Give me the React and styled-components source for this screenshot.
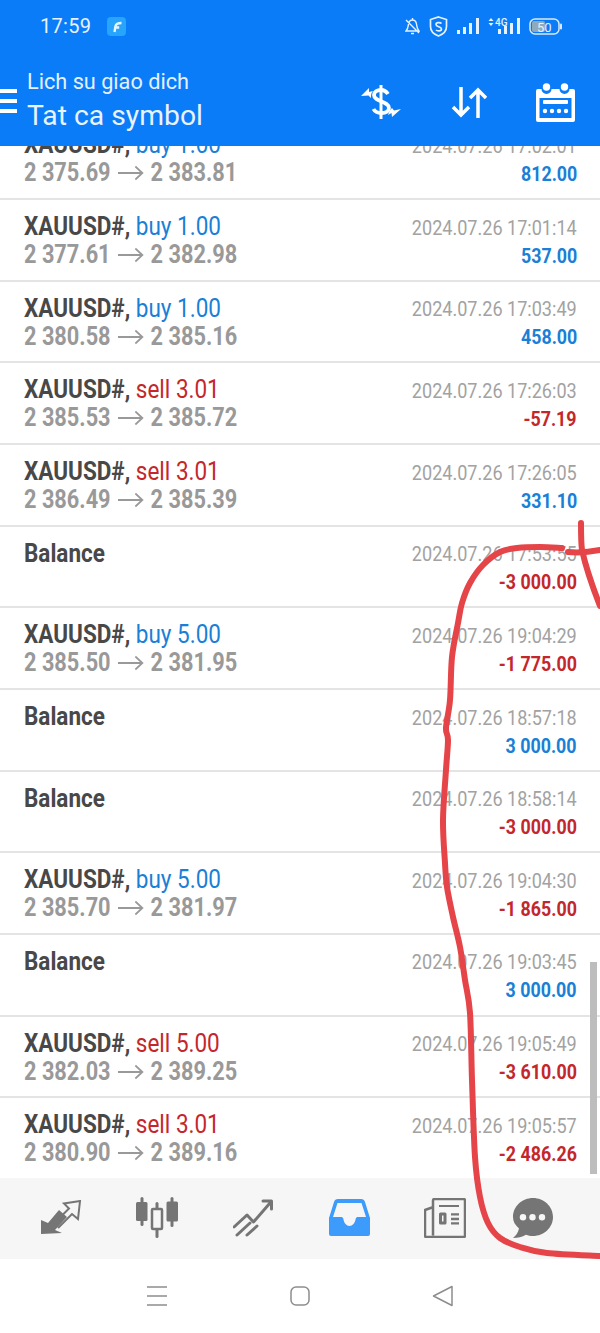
import React from "react";
import styled, { createGlobalStyle } from "styled-components";

const Global = createGlobalStyle`
  html, body { margin: 0; padding: 0; background: #fff; }
  #root { width: 600px; height: 1333px; }
`;

const Screen = styled.div`
  position: relative;
  width: 600px;
  height: 1333px;
  overflow: hidden;
  display: flex;
  flex-direction: column;
  font-family: Roboto, "Liberation Sans", sans-serif;
  background: #fff;
`;

const Header = styled.header`
  flex: 0 0 146px;
  background: #0a7cf8;
  color: #fff;
  display: flex;
  flex-direction: column;
  position: relative;
  z-index: 1;
`;

const StatusBar = styled.div`
  height: 52px;
  display: flex;
  align-items: center;
  padding: 0 38px 0 40px;
  font-size: 20px;
  color: #e6f2ff;
`;

const Time = styled.span`
  letter-spacing: 0.3px;
  margin-right: 16px;
`;

const StatusRight = styled.div`
  margin-left: auto;
  display: flex;
  align-items: center;
  gap: 9px;
`;

const Toolbar = styled.div`
  flex: 1;
  display: flex;
  align-items: center;
`;

const Burger = styled.div`
  width: 17px;
  height: 24px;
  margin: 4px 10px 0 0;
  display: flex;
  flex-direction: column;
  justify-content: space-between;
  span { display: block; height: 4px; background: #fff; }
`;

const Titles = styled.div`
  display: flex;
  flex-direction: column;
  margin-top: 4px;
`;

const Sub = styled.div`
  font-size: 21.7px;
  line-height: 30px;
  color: #e3f0ff;
`;

const Title = styled.div`
  font-size: 28.3px;
  line-height: 38px;
  color: #e8f3ff;
`;

const Actions = styled.div`
  margin-left: auto;
  display: flex;
  align-items: center;
  gap: 49px;
  padding-right: 25px;
  margin-top: 6px;
`;

const ListArea = styled.main`
  flex: 0 0 1032px;
  overflow: hidden;
`;

const List = styled.div`
  margin-top: -27.6px;
`;

const Row = styled.div`
  height: 81.67px;
  box-sizing: border-box;
  border-bottom: 2px solid #e4e4e4;
  padding: 12px 23px 0 24px;
  display: flex;
  justify-content: space-between;
`;

const Narrow = styled.div`
  transform: scaleX(${p => p.$k || 0.86});
  transform-origin: ${p => (p.$right ? "right" : "left")} center;
  white-space: nowrap;
`;

const Col = styled.div`
  display: flex;
  flex-direction: column;
  align-items: ${p => (p.$right ? "flex-end" : "flex-start")};
`;

const Main = styled(Narrow)`
  font-size: 25px;
  line-height: 29px;
  font-weight: 700;
  color: #484848;
`;

const Side = styled.span`
  font-weight: 400;
  color: ${p => (p.$sell ? "#c4272b" : "#1a7fd6")};
`;

const Prices = styled(Narrow)`
  font-size: 25px;
  line-height: 28px;
  font-weight: 700;
  color: #999;
  display: flex;
  align-items: center;
`;

const Arrow = styled.svg`
  margin: 0 8px 0 8px;
`;

const Stamp = styled(Narrow)`
  font-size: 21px;
  line-height: 28px;
  color: #a2a2a2;
  padding-top: 1.5px;
`;

const Profit = styled(Narrow)`
  font-size: 21px;
  line-height: 28px;
  font-weight: 700;
  color: ${p => (p.$loss ? "#c4272b" : "#1a7fd6")};
`;

const Scrollbar = styled.div`
  position: absolute;
  left: 590px;
  top: 962px;
  width: 7px;
  height: 212px;
  background: #bdbdbd;
`;

const Tabs = styled.nav`
  flex: 0 0 81px;
  background: #f6f6f6;
  display: grid;
  grid-template-columns: repeat(6, 96px);
  padding-left: 13px;
  box-sizing: border-box;
`;

const Tab = styled.div`
  display: flex;
  align-items: center;
  justify-content: center;
  padding-bottom: 2px;
  margin-right: ${p => p.$pull || 0}px;
`;

const NavBar = styled.div`
  flex: 1;
  display: flex;
  align-items: center;
  justify-content: center;
  gap: 122px;
`;

const Ink = styled.svg`
  position: absolute;
  left: 0;
  top: 0;
  pointer-events: none;
  z-index: 2;
`;

const rows = [
  ["t", "buy 1.00", "2 375.69", "2 383.81", "2024.07.26 17:02:01", "812.00"],
  ["t", "buy 1.00", "2 377.61", "2 382.98", "2024.07.26 17:01:14", "537.00"],
  ["t", "buy 1.00", "2 380.58", "2 385.16", "2024.07.26 17:03:49", "458.00"],
  ["t", "sell 3.01", "2 385.53", "2 385.72", "2024.07.26 17:26:03", "-57.19"],
  ["t", "sell 3.01", "2 386.49", "2 385.39", "2024.07.26 17:26:05", "331.10"],
  ["b", "", "", "", "2024.07.26 17:53:55", "-3 000.00"],
  ["t", "buy 5.00", "2 385.50", "2 381.95", "2024.07.26 19:04:29", "-1 775.00"],
  ["b", "", "", "", "2024.07.26 18:57:18", "3 000.00"],
  ["b", "", "", "", "2024.07.26 18:58:14", "-3 000.00"],
  ["t", "buy 5.00", "2 385.70", "2 381.97", "2024.07.26 19:04:30", "-1 865.00"],
  ["b", "", "", "", "2024.07.26 19:03:45", "3 000.00"],
  ["t", "sell 5.00", "2 382.03", "2 389.25", "2024.07.26 19:05:49", "-3 610.00"],
  ["t", "sell 3.01", "2 380.90", "2 389.16", "2024.07.26 19:05:57", "-2 486.26"],
];

const Deal = ({ r }) => (
  <Row>
    <Col>
      <Main $k={0.9}>
        {r[0] === "b" ? "Balance" : (
          <>XAUUSD#, <Side $sell={r[1].startsWith("sell")}>{r[1]}</Side></>
        )}
      </Main>
      {r[0] === "t" && (
        <Prices $k={0.87}>
          {r[2]}
          <Arrow width="30" height="16" viewBox="0 0 30 16" fill="none" stroke="#999" strokeWidth="2">
            <path d="M0 8h28M20 1.500l8 6.500-8 6.500" />
          </Arrow>
          {r[3]}
        </Prices>
      )}
    </Col>
    <Col $right>
      <Stamp $right>{r[4]}</Stamp>
      <Profit $right $k={0.85} $loss={r[5].startsWith("-")}>{r[5]}</Profit>
    </Col>
  </Row>
);

const smooth = pts => {
  let d = `M${pts[0][0]} ${pts[0][1]}`;
  for (let i = 0; i < pts.length - 1; i++) {
    const p0 = pts[i - 1] || pts[i];
    const p1 = pts[i];
    const p2 = pts[i + 1];
    const p3 = pts[i + 2] || p2;
    const c1x = p1[0] + (p2[0] - p0[0]) / 6;
    const c1y = p1[1] + (p2[1] - p0[1]) / 6;
    const c2x = p2[0] - (p3[0] - p1[0]) / 6;
    const c2y = p2[1] - (p3[1] - p1[1]) / 6;
    d += `C${c1x} ${c1y} ${c2x} ${c2y} ${p2[0]} ${p2[1]}`;
  }
  return d;
};

const loop = [
  [562, 548], [540, 547], [517, 548], [500, 552], [483, 565], [470, 583], [462, 603],
  [458, 623], [452, 657], [450, 700], [446, 728], [448, 740], [446, 770], [443, 820],
  [445, 863], [447, 887], [453, 917], [460, 947], [465, 980], [470, 1013], [472, 1080],
  [475, 1157], [480, 1197], [488, 1223], [500, 1238], [520, 1247], [547, 1253], [600, 1256],
];

const White = { fill: "#fff" };

export default function App() {
  return (
    <Screen>
      <Global />
      <Header>
        <StatusBar>
          <Time>17:59</Time>
          <svg width="19" height="19" viewBox="0 0 19 19" fill="none">
            <rect width="19" height="19" rx="4" fill="#27a4fb" />
            <path d="M7.500 15l1-6C9 7 11 6 14.500 6M8.700 10.500h3.500" stroke="#e6f6ff" strokeWidth="2.400" />
          </svg>
          <StatusRight>
            <svg width="15" height="19" viewBox="0 0 15 19" fill="none" stroke="#e6f2ff" strokeWidth="1.400">
              <path d="M1 14c2-2 2-4 2.500-7C4 4 6 3 7.500 3s3.500 1 4 4c.5 3 .5 5 2.500 7zM6 16.500h3M7.500 1v2M1 3l13 13" />
            </svg>
            <svg width="19" height="21" viewBox="0 0 18 21" fill="none" stroke="#e6f2ff" strokeWidth="1.700">
              <path d="M9 1l8 2.500v7c0 5-4 8-8 9.500-4-1.500-8-4.500-8-9.500v-7z" />
              <path d="M12 7.500C11 6.500 6.500 6 6.500 8.500S12 10.500 12 13s-4.500 2-5.500 1" />
            </svg>
            <svg width="22" height="17" viewBox="0 0 22 17" fill="#e6f2ff">
              <rect x="0" y="12" width="3" height="4" />
              <rect x="6" y="9" width="3" height="7" />
              <rect x="12" y="5" width="3" height="11" />
              <rect x="19" y="0" width="3" height="16" />
            </svg>
            <svg width="32" height="17" viewBox="0 0 32 17" fill="#e6f2ff">
              <path d="M3 0l2.500 3h-5zM3 8L.5 5h5z" />
              <text x="7" y="8" fontSize="10" fontFamily="Roboto" fontWeight="500">4G</text>
              <rect x="10" y="11" width="3" height="5" />
              <rect x="16" y="8" width="3" height="8" />
              <rect x="22" y="5" width="3" height="11" />
              <rect x="29" y="0" width="3" height="16" />
            </svg>
            <svg width="33" height="17" viewBox="0 0 33 17">
              <rect x="1" y="1" width="29" height="15" rx="5" fill="none" stroke="#dce9f5" strokeWidth="1.500" />
              <rect x="3" y="3" width="13" height="11" rx="2" fill="#8fa9bd" />
              <rect x="31" y="5.500" width="2" height="6" rx="1" fill="#dce9f5" />
              <text x="8" y="13.500" fontSize="13" fontFamily="Roboto" fill="#e6f2ff">50</text>
            </svg>
          </StatusRight>
        </StatusBar>
        <Toolbar>
          <Burger><span /><span /><span /></Burger>
          <Titles>
            <Sub>Lich su giao dich</Sub>
            <Title>Tat ca symbol</Title>
          </Titles>
          <Actions>
            <svg width="41" height="36" viewBox="0 0 41 36" fill="none" stroke="#fff">
              <path d="M20 1v34" strokeWidth="3" />
              <path d="M27 10c-2-3-4-4-7-4-4 0-7 2-7 5 0 7 15 6 15 13 0 3-3 5-7.500 5-4 0-7-2-8-4" strokeWidth="3.800" />
              <path d="M0 12l8-8v4l4-1c-2 2-2 4-2 7l-2.500-2.500z" fill="#fff" stroke="none" />
              <path d="M40 25l-9 8-.500-4-3.500 2c1-3 2-5 4-7l2 2.500z" fill="#fff" stroke="none" />
            </svg>
            <svg width="36" height="31" viewBox="0 0 36 31" fill="none" stroke="#fff" strokeWidth="3.500">
              <path d="M10 0v28M2 20l8 8 8-8M27 31V3M19 11l8-8 8 8" />
            </svg>
            <svg width="39" height="39" viewBox="0 0 39 39">
              <path fillRule="evenodd" fill="#fff" d="M2 6h3.500a5 5 0 0 0 10 0h8a5 5 0 0 0 10 0H37a2 2 0 0 1 2 2v29a2 2 0 0 1-2 2H2a2 2 0 0 1-2-2V8a2 2 0 0 1 2-2zM3.500 15v20h32V15z" />
              <circle cx="10.500" cy="4" r="3.700" {...White} />
              <circle cx="28.500" cy="4" r="3.700" {...White} />
              <rect x="7" y="17" width="25" height="4" rx="1" {...White} />
              <circle cx="9" cy="28" r="2.200" {...White} />
              <circle cx="16" cy="28" r="2.200" {...White} />
              <circle cx="23" cy="28" r="2.200" {...White} />
              <circle cx="30" cy="28" r="2.200" {...White} />
            </svg>
          </Actions>
        </Toolbar>
      </Header>

      <ListArea>
        <List>
          {rows.map((r, i) => <Deal key={i} r={r} />)}
        </List>
      </ListArea>

      <Tabs>
        <Tab>
          <svg width="41" height="36" viewBox="0 0 41 36" fill="none" stroke="#757575" strokeWidth="2">
            <path d="M0 34V20l7 3 11-13 8 7-12 13 7 3z" fill="#757575" stroke="none" />
            <path d="M17 28l14-14 6 5 2-18-16 2.500 5 5-10 10" strokeLinejoin="miter" />
          </svg>
        </Tab>
        <Tab>
          <svg width="42" height="41" viewBox="0 0 42 41" fill="#757575">
            <rect x="4.500" y="0" width="3" height="29" rx="1.500" />
            <rect x="0" y="5" width="11.500" height="19" rx="1.500" />
            <rect x="34.500" y="0" width="3" height="30" rx="1.500" />
            <rect x="30.500" y="4.500" width="11.500" height="20" rx="1.500" />
            <rect x="19.500" y="5" width="3" height="36" rx="1.500" />
            <rect x="16" y="12" width="10" height="20" rx="1" fill="#f6f6f6" stroke="#757575" strokeWidth="2.500" />
          </svg>
        </Tab>
        <Tab>
          <svg width="40" height="38" viewBox="0 0 40 38" fill="none" stroke="#757575" strokeWidth="3" strokeLinecap="round" strokeLinejoin="round">
            <path d="M1 28l13-12 6.500 7L37 4M30 2h8.500v8" />
            <path d="M4 36l13-12M14 36l10-9" />
          </svg>
        </Tab>
        <Tab>
          <svg width="41" height="37" viewBox="0 0 41 37">
            <path fill="#3d9bfb" d="M9 0h23c2 0 3.500 1 4 3l4.500 14.500a3 3 0 0 1 .5 2V35a2 2 0 0 1-2 2H2a2 2 0 0 1-2-2V19.500a3 3 0 0 1 .5-2L5 3c.5-2 2-3 4-3z" />
            <path fill="#f6f6f6" d="M8.500 4h24L37 18h-8c-1.200 0-2 .6-2.300 1.800C26 24 23.500 27 20.500 27s-5.500-3-6.200-7.200C14 18.600 13.200 18 12 18H4z" />
          </svg>
        </Tab>
        <Tab>
          <svg width="42" height="40" viewBox="0 0 42 40" fill="none" stroke="#757575" strokeWidth="2.500" strokeLinejoin="round">
            <path d="M9 37.500V2.500a1.500 1.500 0 0 1 1.500-1.500h29A1.500 1.500 0 0 1 41 2.500v35a1.500 1.500 0 0 1-1.500 1.500h-37A1.500 1.500 0 0 1 1 37.500V12l7-2.500" />
            <path d="M15 8h20" strokeWidth="2" />
            <rect x="16.500" y="16" width="4.500" height="9" strokeWidth="3" />
            <path d="M27 16.300h8M27 21h8M27 25.300h8" strokeWidth="2.300" />
          </svg>
        </Tab>
        <Tab $pull={18}>
          <svg width="41" height="40" viewBox="0 0 41 40">
            <path d="M21 0c11 0 20 8.500 20 19s-9 19-20 19c-2.500 0-5-.5-7-1.300C10 39 6 40 1 40c3-2.500 5-5 6-9.500C3 27 1 23.500 1 19 1 8.500 10 0 21 0z" fill="#757575" />
            <circle cx="11" cy="19.300" r="3.200" fill="#f6f6f6" />
            <circle cx="20.500" cy="19.300" r="3.200" fill="#f6f6f6" />
            <circle cx="30" cy="19.300" r="3.200" fill="#f6f6f6" />
          </svg>
        </Tab>
      </Tabs>

      <NavBar>
        <svg width="22" height="22" viewBox="0 0 22 22" stroke="#8d8d8d" strokeWidth="1.500" fill="none">
          <path d="M1 2h20M1 11h20M1 20h20" />
        </svg>
        <svg width="20" height="20" viewBox="0 0 20 20" stroke="#8d8d8d" strokeWidth="1.500" fill="none">
          <rect x="1" y="1" width="18" height="18" rx="5" />
        </svg>
        <svg width="22" height="22" viewBox="0 0 22 22" stroke="#8d8d8d" strokeWidth="1.500" fill="none" strokeLinejoin="round">
          <path d="M20 1.500v19L1.500 11z" />
        </svg>
      </NavBar>

      <Scrollbar />

      <Ink width="600" height="1333" viewBox="0 0 600 1333" fill="none" stroke="#e54548" strokeWidth="6" strokeLinecap="round" strokeLinejoin="round">
        <path d="M581 523c0 9 0 20 1 27 4 18 11 38 18 56" />
        <path d="M568 552c10 1 22 0 32-2" />
        <path d={smooth(loop)} />
      </Ink>
    </Screen>
  );
}
